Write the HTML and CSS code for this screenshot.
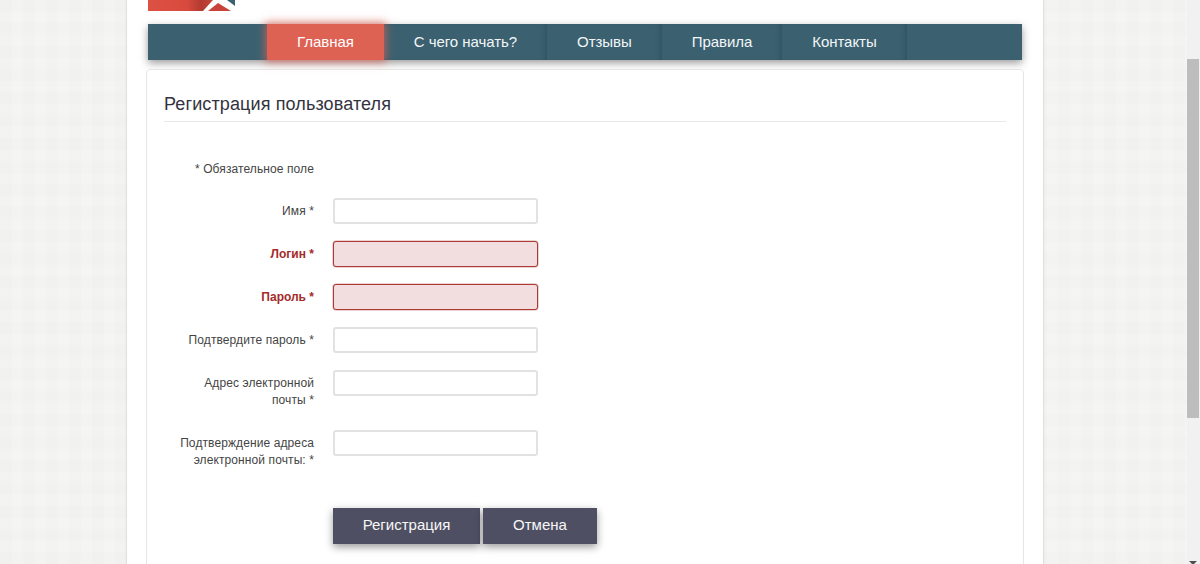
FILE: index.html
```html
<!DOCTYPE html>
<html lang="ru">
<head>
<meta charset="utf-8">
<title>Регистрация пользователя</title>
<link rel="stylesheet" href="styles.css">
</head>
<body>
<div class="viewport">
  <div class="page">
    <div class="sheet">
      <header class="logo-row">
        <svg class="logo" width="90" height="11" viewBox="0 0 90 11" aria-hidden="true">
          <defs>
            <linearGradient id="lg" x1="0" x2="1" y1="0" y2="0">
              <stop offset="0" stop-color="#dd5044"/>
              <stop offset="0.6" stop-color="#d84a3e"/>
              <stop offset="0.82" stop-color="#b23a30"/>
              <stop offset="1" stop-color="#c8443a"/>
            </linearGradient>
          </defs>
          <polygon points="0,0 65,0 55,11 0,11" fill="url(#lg)"/>
          <polygon points="60,11 70,3 83,11" fill="#c8443a"/>
          <polygon points="79,0 87,0 87,6" fill="#3b6170"/>
        </svg>
      </header>
      <nav class="nav">
        <a class="nav-item active">Главная</a>
        <a class="nav-item">С чего начать?</a>
        <a class="nav-item">Отзывы</a>
        <a class="nav-item">Правила</a>
        <a class="nav-item">Контакты</a>
      </nav>
      <main class="panel">
        <h1 class="title">Регистрация пользователя</h1>
        <form class="form">
          <p class="row note-row"><span class="label">* Обязательное поле</span></p>
          <div class="row"><label class="label">Имя *</label><input class="field" type="text"></div>
          <div class="row invalid"><label class="label">Логин *</label><input class="field" type="text"></div>
          <div class="row invalid"><label class="label">Пароль *</label><input class="field" type="password"></div>
          <div class="row"><label class="label">Подтвердите пароль *</label><input class="field" type="password"></div>
          <div class="row tall"><label class="label">Адрес электронной почты *</label><input class="field" type="text"></div>
          <div class="row tall"><label class="label">Подтверждение адреса электронной почты: *</label><input class="field" type="text"></div>
          <div class="actions">
            <button class="btn reg" type="button">Регистрация</button>
            <button class="btn cancel" type="button">Отмена</button>
          </div>
        </form>
      </main>
    </div>
  </div>
  <aside class="scrollbar">
    <span class="thumb"></span>
    <span class="arrow"></span>
  </aside>
</div>
</body>
</html>
```
FILE: styles.css
```css
* { box-sizing: border-box; }
html, body { margin: 0; height: 100%; overflow: hidden; }
body { font-family: "Liberation Sans", Arial, sans-serif; color: #333; }
.viewport { display: flex; width: 1200px; height: 564px; overflow: hidden; }
.page {
  width: 1187px;
  height: 564px;
  padding-left: 127px;
  background-color: #f1f1f0;
  background-image:
    repeating-linear-gradient(90deg, rgba(255,255,255,0) 0 12px, rgba(255,255,255,.16) 12px 23px),
    repeating-linear-gradient(0deg, rgba(255,255,255,0) 0 12px, rgba(255,255,255,.12) 12px 23px);
}
.sheet {
  width: 916px;
  height: 564px;
  padding: 0 19px;
  background: #fff;
  box-shadow: 0 0 2px rgba(0,0,0,.22);
}
.logo-row { height: 24px; padding-left: 2px; }
.logo { display: block; }
.nav {
  display: flex;
  height: 36px;
  margin: 0 2px;
  padding-left: 119px;
  background: #3b6170;
  box-shadow: 0 3px 8px rgba(0,0,0,.4);
}
.nav-item {
  display: block;
  padding: 0 30px;
  color: #f3f6f7;
  font-size: 15px;
  letter-spacing: -.05px;
  line-height: 35px;
  box-shadow: inset -5px 0 5px -3px rgba(30,60,72,.4);
}
.nav-item.active {
  background: #dd6254;
  color: #fff;
  box-shadow: 0 0 8px 2px rgba(221,98,84,.7);
}
.panel {
  margin-top: 9px;
  width: 878px;
  height: 520px;
  padding: 0 17px;
  background: #fff;
  border: 1px solid #e6e6e6;
  border-radius: 4px;
}
.title {
  margin: 0;
  height: 52px;
  padding-top: 23px;
  border-bottom: 1px solid #e8e8e8;
  font-size: 18px;
  font-weight: 400;
  letter-spacing: .12px;
  line-height: 22px;
  color: #333340;
}
.form { padding-top: 38px; }
.row {
  display: flex;
  align-items: flex-start;
  gap: 19px;
  height: 43px;
  margin: 0;
}
.note-row { height: 38px; }
.tall { height: 59.5px; }
.label {
  flex: none;
  width: 150px;
  padding: 5px 0 0 10px;
  font-size: 12px;
  letter-spacing: .1px;
  line-height: 17px;
  text-align: right;
  color: #444;
}
.note-row .label { padding-top: 1px; }
.field {
  display: block;
  width: 205px;
  height: 26px;
  padding: 0 6px;
  background: #fff;
  border: 2px solid #e2e2e2;
  border-radius: 3px;
  outline: 0;
}
.invalid .label { color: #a52a2a; font-weight: 700; letter-spacing: 0; }
.invalid .field {
  background: #f2dede;
  border: 1px solid #a93a36;
  box-shadow: 0 0 0 .5px rgba(169,58,54,.45);
}
.actions { display: flex; gap: 3px; margin-top: 19px; margin-left: 169px; }
.btn {
  height: 36px;
  padding: 0 0 3px;
  border: 0;
  background: #4f4f63;
  color: #f7f7f7;
  font: 15px "Liberation Sans", Arial, sans-serif;
  box-shadow: 0 3px 8px rgba(0,0,0,.4);
}
.reg { width: 147px; }
.cancel { width: 114px; }
.scrollbar {
  position: relative;
  flex: none;
  width: 13px;
  height: 564px;
  background: #f1f1f1;
}
.thumb {
  position: absolute;
  top: 59px;
  left: 0;
  width: 12px;
  height: 359px;
  background: #bdbdbd;
}
.arrow {
  position: absolute;
  left: 2px;
  bottom: -1px;
  border-left: 4px solid transparent;
  border-right: 4px solid transparent;
  border-top: 4px solid #505050;
}
```
